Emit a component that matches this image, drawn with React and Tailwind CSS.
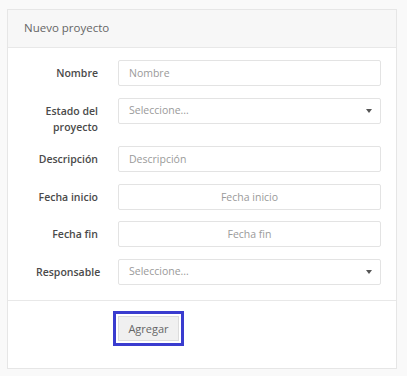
import React from "react";

const fields = [
  { label: "Nombre", type: "text", placeholder: "Nombre" },
  { label: "Estado del proyecto", type: "select", placeholder: "Seleccione..." },
  { label: "Descripción", type: "text", placeholder: "Descripción" },
  { label: "Fecha inicio", type: "date", placeholder: "Fecha inicio" },
  { label: "Fecha fin", type: "date", placeholder: "Fecha fin" },
  { label: "Responsable", type: "select", placeholder: "Seleccione..." },
];

function Field({ field }) {
  if (field.type === "select") {
    return (
      <div className="h-[26px] border border-[#e3e3e3] rounded-[2px] bg-white flex items-center justify-between pl-[10px] pr-[8px] text-[10.5px] text-[#9a9a9a]">
        <span>{field.placeholder}</span>
        <span className="w-0 h-0 border-x-[3.5px] border-x-transparent border-t-[4px] border-t-[#555]" />
      </div>
    );
  }
  return (
    <input
      placeholder={field.placeholder}
      className={
        "h-[26px] w-full border border-[#e3e3e3] rounded-[2px] bg-white px-[10px] text-[10.5px] text-[#555] placeholder:text-[#9a9a9a] outline-none " +
        (field.type === "date" ? "text-center" : "")
      }
    />
  );
}

export default function App() {
  return (
    <div
      className="min-h-[376px] bg-[#f9f9f9] pt-[9px] pl-[7px] pr-[10px] pb-[9px]"
      style={{ fontFamily: '"Open Sans", "Liberation Sans", sans-serif' }}
    >
      <div className="border border-[#e6e6e6] bg-white">
        <div className="h-[38px] bg-[#f7f7f7] border-b border-[#e8e8e8] flex items-center pl-4 pb-[1px] text-[11.5px] text-[#666]">
          Nuevo proyecto
        </div>
        <div className="pt-[12px] pb-[15px] pr-[15px] grid grid-cols-[90px_1fr] gap-x-[20px] gap-y-[11.5px]">
          {fields.map((f) => (
            <React.Fragment key={f.label}>
              <label className="text-right text-[10.5px] leading-4 font-semibold text-[#4a4a4a] pt-[5px] pl-[28px]">
                {f.label}
              </label>
              <Field field={f} />
            </React.Fragment>
          ))}
        </div>
        <div className="border-t border-[#e8e8e8] pt-[14px] pb-[27px] pl-[110px]">
          <button className="h-[25px] w-[61px] border border-[#dcdcdc] bg-[#f0f0f0] text-[11px] text-[#666] outline-[3px] outline-solid outline-[#3a3ccf] outline-offset-[2px]">
            Agregar
          </button>
        </div>
      </div>
    </div>
  );
}
